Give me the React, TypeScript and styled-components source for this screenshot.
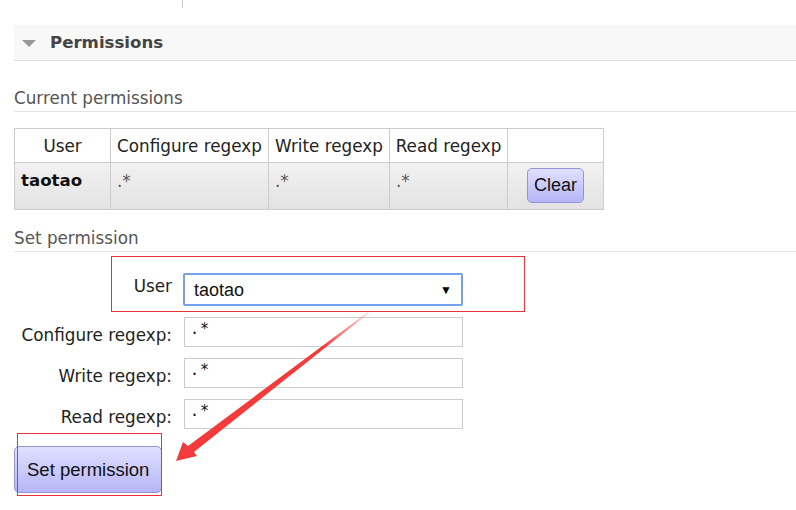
import React from "react";
import styled, { createGlobalStyle } from "styled-components";

const Global = createGlobalStyle`
  html, body { margin: 0; padding: 0; background: #fff; }
  body { font-family: "DejaVu Sans", Verdana, sans-serif; color: #484848; width: 796px; height: 510px; overflow: hidden; }
`;

const Page = styled.div`
  position: relative;
  width: 796px;
  height: 510px;
  padding: 0 0 0 14px;
  box-sizing: border-box;
`;

const TopStub = styled.div`
  width: 1px;
  height: 8px;
  margin-left: 168px;
  background: #ccc;
`;

const SectionHeader = styled.div`
  display: flex;
  align-items: center;
  gap: 14px;
  margin-top: 17px;
  height: 35px;
  padding-left: 8px;
  background: #f8f8f8;
  border-bottom: 1px solid #ddd;
  font-size: 16.6px;
  font-weight: bold;
  color: #444;
`;

const Tri = styled.span`
  width: 0;
  height: 0;
  border-left: 7px solid transparent;
  border-right: 7px solid transparent;
  border-top: 7px solid #999;
  margin-top: 1px;
`;

const SubHeading = styled.h3<{ $mt: number }>`
  margin: ${(p) => p.$mt}px 0 0 0;
  font-size: 16.8px;
  font-weight: normal;
  color: #555;
  padding-bottom: 4px;
  border-bottom: 1px solid #e4e4e4;
  line-height: 18px;
`;

const Table = styled.table`
  border-collapse: collapse;
  margin-top: 16px;
  font-size: 16.8px;
  color: #222;
`;

const Th = styled.th<{ $w: number }>`
  width: ${(p) => p.$w}px;
  box-sizing: border-box;
  height: 34px;
  border: 1px solid #ccc;
  font-weight: normal;
  text-align: center;
  padding: 0 4px;
  background: #fff;
  white-space: nowrap;
`;

const BodyRow = styled.tr`
  background: linear-gradient(#f2f2f2, #e2e2e2);
`;

const Td = styled.td<{ $bold?: boolean; $center?: boolean }>`
  border: 1px solid #ccc;
  vertical-align: top;
  padding: ${(p) => (p.$center ? "5px 6px" : "8px 6px 0 6px")};
  height: 47px;
  box-sizing: border-box;
  font-size: ${(p) => (p.$bold ? "16.6px" : "16.8px")};
  font-weight: ${(p) => (p.$bold ? "bold" : "normal")};
  text-align: ${(p) => (p.$center ? "center" : "left")};
  color: ${(p) => (p.$bold ? "#111" : "#555")};
`;

const Button = styled.button<{ $big?: boolean }>`
  font-family: "Liberation Sans", Arial, sans-serif;
  font-size: ${(p) => (p.$big ? "18.5px" : "18px")};
  color: #111;
  background: linear-gradient(#e0e0ff, #b6b6f8);
  border: 1px solid #9494dc;
  border-radius: 5px;
  height: ${(p) => (p.$big ? "47px" : "35px")};
  padding: ${(p) => (p.$big ? "0 12px" : "0 6px")};
  cursor: pointer;
`;

const Form = styled.div`
  display: grid;
  grid-template-columns: 158px 279px;
  grid-template-rows: 33px 30px 30px 30px;
  column-gap: 12px;
  row-gap: 11px;
  margin-top: 21px;
  align-items: center;
`;

const Label = styled.label<{ $shift: number }>`
  text-align: right;
  font-size: 16.8px;
  line-height: 20px;
  color: #222;
  position: relative;
  top: ${(p) => p.$shift}px;
`;

const SelectBox = styled.div`
  height: 33px;
  box-sizing: border-box;
  border: 2px solid #74a0ec;
  border-radius: 2px;
  display: flex;
  align-items: center;
  justify-content: space-between;
  padding: 1px 9px 0 9px;
  font-family: "Liberation Sans", Arial, sans-serif;
  font-size: 18px;
  color: #111;
  margin-left: -1px;
`;

const Caret = styled.span`
  font-size: 12px;
  color: #000;
`;

const Input = styled.div`
  height: 30px;
  box-sizing: border-box;
  border: 1px solid #ccc;
  padding: 2px 0 0 5px;
  font-family: "DejaVu Sans Mono", monospace;
  font-size: 15px;
  color: #111;
  letter-spacing: 1px;
`;

const ButtonRow = styled.div`
  margin-top: 17px;
`;

const Overlay = styled.svg`
  position: absolute;
  left: 0;
  top: 0;
  pointer-events: none;
`;

export default function App() {
  return (
    <>
      <Global />
      <Page>
        <TopStub />
        <SectionHeader>
          <Tri />
          Permissions
        </SectionHeader>
        <SubHeading $mt={28}>Current permissions</SubHeading>
        <Table>
          <thead>
            <tr>
              <Th $w={96}>User</Th>
              <Th $w={158}>Configure regexp</Th>
              <Th $w={121}>Write regexp</Th>
              <Th $w={118}>Read regexp</Th>
              <Th $w={96}></Th>
            </tr>
          </thead>
          <tbody>
            <BodyRow>
              <Td $bold>taotao</Td>
              <Td>.*</Td>
              <Td>.*</Td>
              <Td>.*</Td>
              <Td $center>
                <Button>Clear</Button>
              </Td>
            </BodyRow>
          </tbody>
        </Table>
        <SubHeading $mt={19}>Set permission</SubHeading>
        <Form>
          <Label $shift={-4}>User</Label>
          <SelectBox>
            taotao
            <Caret>▼</Caret>
          </SelectBox>
          <Label $shift={3}>Configure regexp:</Label>
          <Input>.*</Input>
          <Label $shift={3}>Write regexp:</Label>
          <Input>.*</Input>
          <Label $shift={3}>Read regexp:</Label>
          <Input>.*</Input>
        </Form>
        <ButtonRow>
          <Button $big>Set permission</Button>
        </ButtonRow>
        <Overlay width="796" height="510" viewBox="0 0 796 510">
          <rect x="111.5" y="256.5" width="413" height="55" fill="none" stroke="#e8333a" strokeWidth="1" />
          <rect x="17.5" y="433.5" width="144" height="62" fill="none" stroke="#e8333a" strokeWidth="1" />
          <defs>
            <linearGradient id="ag" x1="368" y1="312" x2="190" y2="450" gradientUnits="userSpaceOnUse">
              <stop offset="0" stopColor="#ff4444" stopOpacity="0.2" />
              <stop offset="0.25" stopColor="#f23c3c" />
              <stop offset="1" stopColor="#f23c3c" />
            </linearGradient>
          </defs>
          <polygon
            points="368,312 369,313 194,452 197,456 176,461 183,442 188,446"
            fill="url(#ag)"
          />
        </Overlay>
      </Page>
    </>
  );
}
